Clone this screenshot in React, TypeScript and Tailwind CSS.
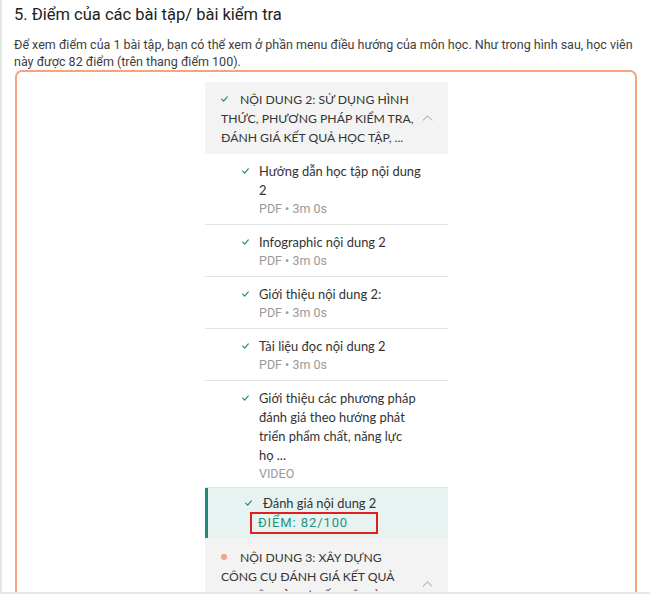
import { ChevronUp } from "lucide-react";

type Item = {
  lines: string[];
  meta: string;
};

const items: Item[] = [
  { lines: ["Hướng dẫn học tập nội dung", "2"], meta: "PDF • 3m 0s" },
  { lines: ["Infographic nội dung 2"], meta: "PDF • 3m 0s" },
  { lines: ["Giới thiệu nội dung 2:"], meta: "PDF • 3m 0s" },
  { lines: ["Tài liệu đọc nội dung 2"], meta: "PDF • 3m 0s" },
  {
    lines: ["Giới thiệu các phương pháp", "đánh giá theo hướng phát", "triển phẩm chất, năng lực", "họ ..."],
    meta: "VIDEO",
  },
];

const sidebarFont = { fontFamily: "Lato, 'Noto Sans', sans-serif" };

function Check({ className = "" }: { className?: string }) {
  return (
    <svg viewBox="0 0 10 8" className={`w-[7px] h-[6px] ${className}`} fill="none">
      <path d="M1 4.2 3.8 7 9 1" stroke="#1d8a7b" strokeWidth="1.7" strokeLinecap="round" strokeLinejoin="round" />
    </svg>
  );
}

function ModuleHeader({
  lines,
  done,
  className = "",
}: {
  lines: string[];
  done: boolean;
  className?: string;
}) {
  return (
    <div className={`relative bg-[#f3f3f3] pl-[16px] ${className}`}>
      <div className="text-[12.2px] leading-[19px] text-[#353535] whitespace-nowrap" style={sidebarFont}>
        {lines.map((line, i) => (
          <div key={i}>
            {i === 0 &&
              (done ? (
                <Check className="inline-block mr-[12px] mb-[3px]" />
              ) : (
                <span className="inline-block w-[6px] h-[6px] rounded-full bg-[#f3a48f] mr-[13px] mb-[2px]" />
              ))}
            {line}
          </div>
        ))}
      </div>
      <ChevronUp
        className="absolute right-[12px] top-1/2 -translate-y-1/2 w-[17px] h-[17px] text-[#9a9a9a]"
        strokeWidth={1.4}
      />
    </div>
  );
}

export default function App() {
  return (
    <div
      className="w-[650px] h-[594px] overflow-hidden bg-white border-l-2 border-[#e6e6e6] relative"
      style={{ fontFamily: "Roboto, 'Noto Sans', sans-serif" }}
    >
      <div className="pl-[12px] pr-[12px] pt-[3px]">
        <h2 className="text-[16.5px] leading-[24px] text-[#222] font-normal">
          5. Điểm của các bài tập/ bài kiểm tra
        </h2>
        <p className="mt-[9px] text-[12.5px] leading-[17px] text-[#3d3d3d]">
          Để xem điểm của 1 bài tập, bạn có thể xem ở phần menu điều hướng của môn học. Như trong hình sau, học viên
          này được 82 điểm (trên thang điểm 100).
        </p>
        <div className="ml-[1px] w-[622px] h-[600px] border-2 border-[#f5a47d] rounded-[7px] pt-[10px]">
          <div className="ml-[188px] w-[243px]">
            <ModuleHeader
              done
              lines={["NỘI DUNG 2: SỬ DỤNG HÌNH", "THỨC, PHƯƠNG PHÁP KIỂM TRA,", "ĐÁNH GIÁ KẾT QUẢ HỌC TẬP, ..."]}
              className="pt-[8px] pb-[7px]"
            />
            {items.map((item, i) => (
              <div
                key={i}
                className={`flex border-b border-[#e4e4e4] pl-[37px] pt-[8px] ${i === items.length - 1 ? "pb-[4px]" : "pb-[6px]"}`}
              >
                <div className="w-[17px] pt-[6px]">
                  <Check />
                </div>
                <div>
                  <div className="text-[12.9px] leading-[19px] text-[#333] whitespace-nowrap" style={sidebarFont}>
                    {item.lines.map((l, j) => (
                      <div key={j}>{l}</div>
                    ))}
                  </div>
                  <div className="text-[12.5px] leading-[18px] text-[#9a9a9a]">{item.meta}</div>
                </div>
              </div>
            ))}
            <div className="flex bg-[#e7f3f1] border-l-[3px] border-[#1f8a7c] pl-[35px] pt-[6px] pb-[4px]">
              <div className="w-[20px] pt-[6px] pl-[2px]">
                <Check />
              </div>
              <div>
                <div className="text-[12.9px] leading-[19px] text-[#333]" style={sidebarFont}>
                  Đánh giá nội dung 2
                </div>
                <div className="-mt-[1px] -ml-[13px] w-[128px] h-[22px] border-2 border-[#e0201e] pl-[6px] text-[13px] leading-[18px] font-normal tracking-[0.9px] text-[#22927f]">
                  ĐIỂM: 82/100
                </div>
              </div>
            </div>
            <ModuleHeader
              done={false}
              lines={["NỘI DUNG 3: XÂY DỰNG", "CÔNG CỤ ĐÁNH GIÁ KẾT QUẢ", "HỌC TẬP VÀ SỰ TIẾN BỘ CỦA HỌC", "SINH"]}
              className="pt-[10px] pb-[6px]"
            />
          </div>
        </div>
      </div>
      <div className="absolute left-0 right-0 bottom-0 h-[2px] bg-[#e6e6e6]" />
    </div>
  );
}
